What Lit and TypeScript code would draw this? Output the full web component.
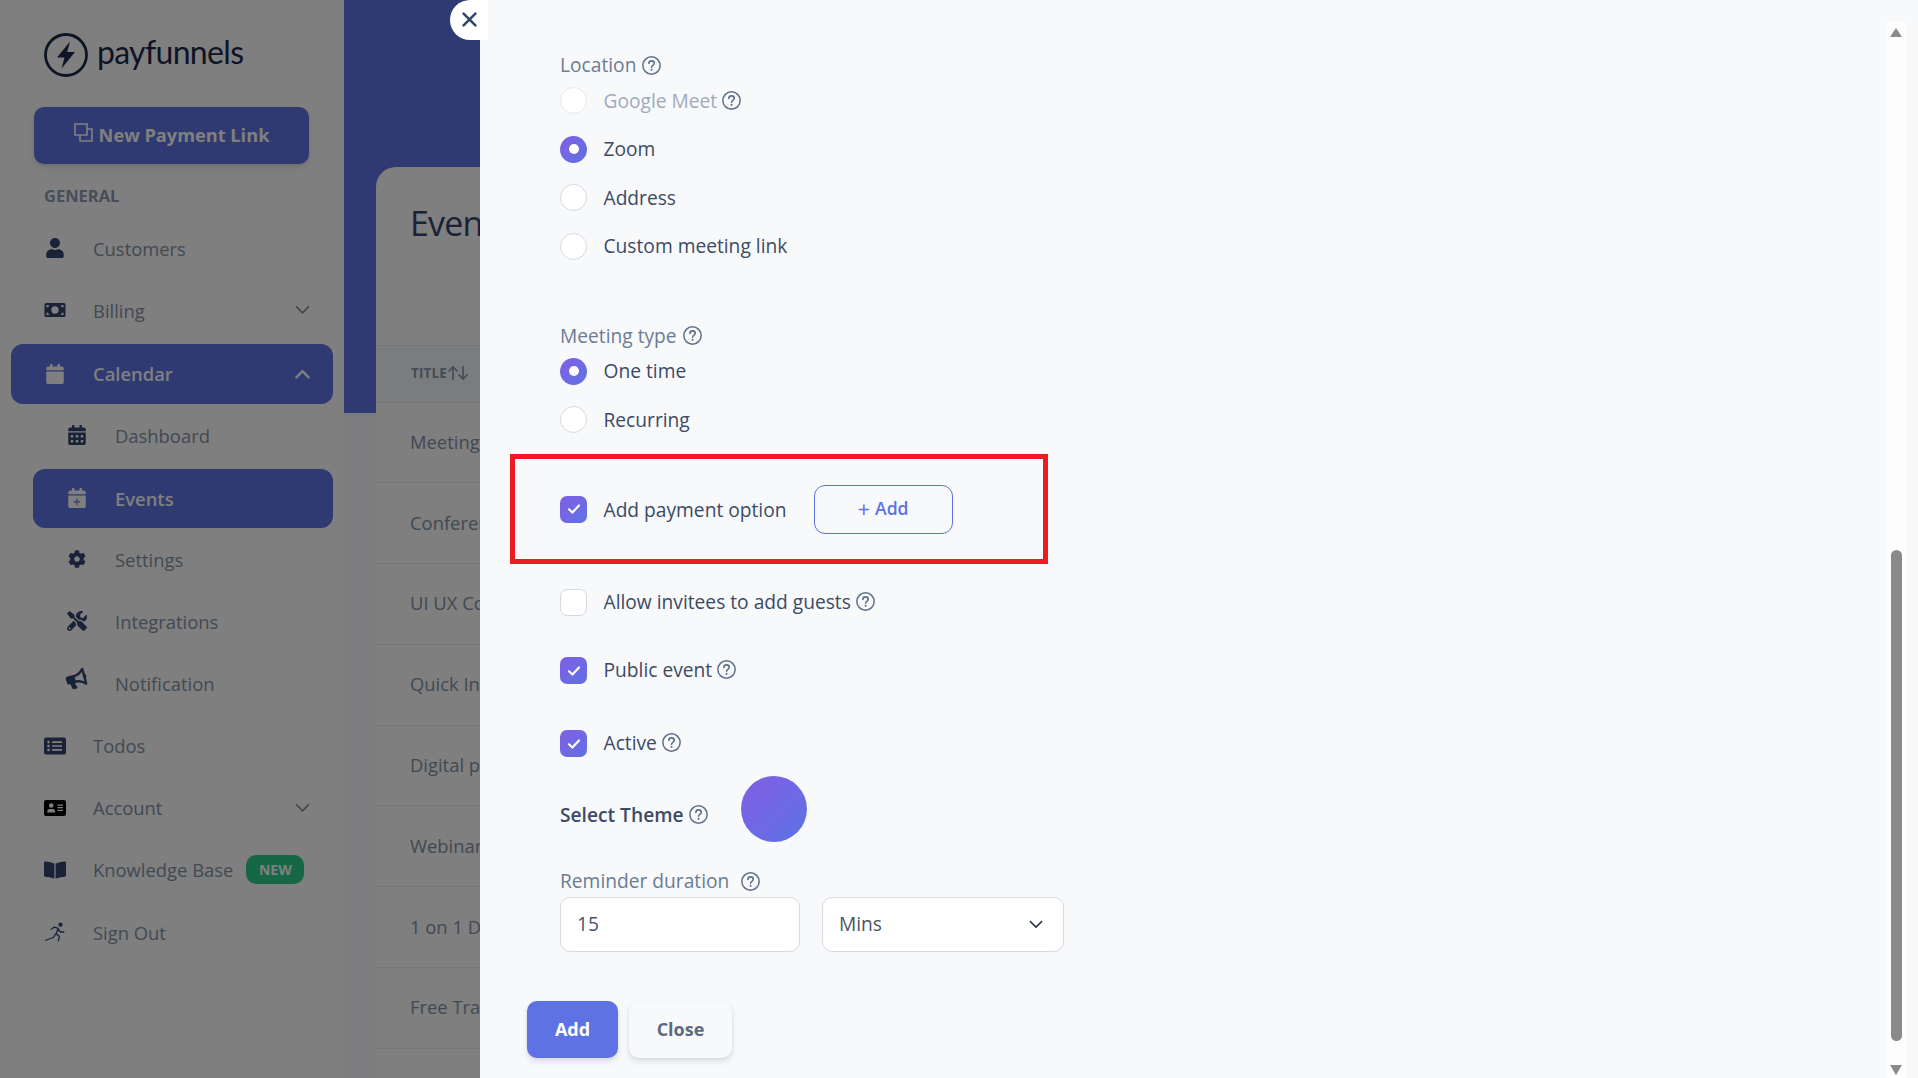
import { LitElement, html, css } from "lit";
import { customElement } from "lit/decorators.js";

const fa = (vb: string, d: string, cls = "ico") =>
  html`<svg class=${cls} viewBox=${vb} fill="currentColor" aria-hidden="true"><path d=${d}></path></svg>`;

const icons: Record<string, any> = {
  user: fa("0 0 448 512", "M224 256c70.7 0 128-57.3 128-128S294.7 0 224 0 96 57.3 96 128s57.3 128 128 128zm89.6 32h-16.7c-22.2 10.2-46.9 16-72.9 16s-50.6-5.8-72.9-16h-16.7C60.2 288 0 348.2 0 422.4V464c0 26.5 21.5 48 48 48h352c26.5 0 48-21.5 48-48v-41.6c0-74.2-60.2-134.4-134.4-134.4z"),
  money: html`<svg class="ico w" viewBox="0 0 22 16" aria-hidden="true"><path fill="currentColor" fill-rule="evenodd" d="M2 1h18a1.500 1.500 0 0 1 1.500 1.500v11A1.500 1.500 0 0 1 20 15H2a1.500 1.500 0 0 1-1.500-1.500v-11A1.500 1.500 0 0 1 2 1zM11 4.300a3.700 3.700 0 1 0 0 7.400 3.700 3.700 0 0 0 0-7.400zM2.500 3v2.500A2.500 2.500 0 0 0 5 3zM17 3a2.500 2.500 0 0 0 2.500 2.500V3zM2.500 10.500V13H5a2.500 2.500 0 0 0-2.500-2.500zM19.500 10.500A2.500 2.500 0 0 0 17 13h2.500z"></path></svg>`,
  calendar: fa("0 0 448 512", "M12 192h424c6.600 0 12 5.400 12 12v260c0 26.500-21.500 48-48 48H48c-26.500 0-48-21.500-48-48V204c0-6.600 5.400-12 12-12zm436-44v-36c0-26.500-21.500-48-48-48h-48V12c0-6.600-5.400-12-12-12h-40c-6.600 0-12 5.400-12 12v52H160V12c0-6.600-5.400-12-12-12h-40c-6.600 0-12 5.400-12 12v52H48C21.500 64 0 85.500 0 112v36c0 6.600 5.400 12 12 12h424c6.600 0 12-5.400 12-12z"),
  calendarAlt: fa("0 0 448 512", "M0 464c0 26.500 21.500 48 48 48h352c26.500 0 48-21.500 48-48V192H0v272zm320-196c0-6.600 5.400-12 12-12h40c6.600 0 12 5.400 12 12v40c0 6.600-5.400 12-12 12h-40c-6.600 0-12-5.400-12-12v-40zm0 128c0-6.600 5.400-12 12-12h40c6.600 0 12 5.400 12 12v40c0 6.600-5.400 12-12 12h-40c-6.600 0-12-5.400-12-12v-40zM192 268c0-6.600 5.400-12 12-12h40c6.600 0 12 5.400 12 12v40c0 6.600-5.400 12-12 12h-40c-6.600 0-12-5.400-12-12v-40zm0 128c0-6.600 5.400-12 12-12h40c6.600 0 12 5.400 12 12v40c0 6.600-5.400 12-12 12h-40c-6.600 0-12-5.400-12-12v-40zM64 268c0-6.600 5.400-12 12-12h40c6.600 0 12 5.400 12 12v40c0 6.600-5.400 12-12 12H76c-6.600 0-12-5.400-12-12v-40zm0 128c0-6.600 5.400-12 12-12h40c6.600 0 12 5.400 12 12v40c0 6.600-5.400 12-12 12H76c-6.600 0-12-5.400-12-12v-40zM400 64h-48V16c0-8.800-7.200-16-16-16h-32c-8.800 0-16 7.200-16 16v48H160V16c0-8.800-7.200-16-16-16h-32c-8.800 0-16 7.200-16 16v48H48C21.500 64 0 85.500 0 112v48h448v-48c0-26.500-21.500-48-48-48z"),
  calendarPlus: html`<svg class="ico" viewBox="0 0 448 512" aria-hidden="true"><path fill="currentColor" fill-rule="evenodd" d="M436 160H12c-6.600 0-12-5.400-12-12v-36c0-26.500 21.500-48 48-48h48V12c0-6.600 5.400-12 12-12h40c6.600 0 12 5.400 12 12v52h128V12c0-6.600 5.400-12 12-12h40c6.600 0 12 5.400 12 12v52h48c26.500 0 48 21.500 48 48v36c0 6.600-5.400 12-12 12zM12 192h424c6.600 0 12 5.400 12 12v260c0 26.500-21.500 48-48 48H48c-26.500 0-48-21.500-48-48V204c0-6.600 5.400-12 12-12zM208 270v72h-72v28h72v72h28v-72h72v-28h-72v-72z"></path></svg>`,
  cog: fa("0 0 512 512", "M487.400 315.700l-42.600-24.600c4.300-23.200 4.300-47 0-70.200l42.600-24.600c4.900-2.800 7.100-8.600 5.500-14-11.100-35.600-30-67.800-54.700-94.600-3.800-4.100-10-5.100-14.800-2.300L380.800 110c-17.900-15.400-38.500-27.300-60.800-35.100V25.800c0-5.600-3.900-10.500-9.400-11.700-36.700-8.200-74.300-7.800-109.200 0-5.500 1.200-9.400 6.100-9.400 11.700V75c-22.200 7.900-42.800 19.800-60.800 35.100L88.700 85.500c-4.900-2.800-11-1.900-14.800 2.300-24.700 26.700-43.600 58.900-54.700 94.600-1.700 5.400.6 11.200 5.500 14L67.300 221c-4.300 23.200-4.300 47 0 70.200l-42.600 24.600c-4.900 2.800-7.100 8.600-5.500 14 11.100 35.600 30 67.800 54.700 94.600 3.800 4.100 10 5.100 14.800 2.300l42.600-24.600c17.900 15.400 38.500 27.300 60.800 35.100v49.200c0 5.600 3.900 10.500 9.400 11.700 36.700 8.200 74.300 7.800 109.200 0 5.500-1.200 9.400-6.100 9.400-11.700v-49.200c22.200-7.900 42.800-19.800 60.800-35.100l42.600 24.600c4.900 2.800 11 1.900 14.800-2.300 24.700-26.700 43.600-58.900 54.700-94.600 1.500-5.500-.7-11.300-5.600-14.100zM256 336c-44.100 0-80-35.900-80-80s35.900-80 80-80 80 35.900 80 80-35.900 80-80 80z", "ico cog"),
  tools: fa("0 0 512 512", "M501.100 395.700L384 278.600c-23.100-23.100-57.600-27.600-85.400-13.900L192 158.100V96L64 0 0 64l96 128h62.100l106.600 106.600c-13.600 27.800-9.200 62.300 13.900 85.400l117.100 117.100c14.600 14.600 38.200 14.600 52.700 0l52.700-52.700c14.500-14.600 14.500-38.200 0-52.700zM331.700 225c28.300 0 54.900 11 74.900 31l19.400 19.400c15.800-6.900 30.800-16.500 43.800-29.500 37.100-37.100 49.700-89.300 37.900-136.700-2.200-9-13.500-12.100-20.100-5.500l-74.400 74.400-67.900-11.300L334 98.900l74.400-74.400c6.600-6.600 3.400-17.900-5.700-20.200-47.400-11.700-99.600.9-136.600 37.900-28.500 28.500-41.900 66.100-41.200 103.600l82.100 82.100c8.100-1.900 16.500-2.900 24.700-2.900zm-103.900 82l-56.700-56.700L18.700 402.800c-25 25-25 65.500 0 90.500s65.500 25 90.500 0l123.600-123.600c-7.600-19.900-9.900-41.600-5-62.700zM64 472c-13.200 0-24-10.800-24-24 0-13.300 10.700-24 24-24s24 10.700 24 24c0 13.200-10.700 24-24 24z"),
  bullhorn: html`<svg class="ico horn" viewBox="0 0 576 512" aria-hidden="true"><path fill="currentColor" d="M576 240c0-23.630-12.950-44.040-32-55.120V32.010C544 23.260 537.020 0 512 0c-7.120 0-14.190 2.380-19.980 7.020l-85.030 68.030C364.280 109.190 310.660 128 256 128H64c-35.350 0-64 28.650-64 64v96c0 35.350 28.650 64 64 64h33.700c-1.390 10.480-2.180 21.140-2.180 32 0 39.770 9.260 77.350 25.560 110.940 5.190 10.690 16.520 17.060 28.400 17.060h74.280c26.050 0 41.690-29.840 25.900-50.560-16.400-21.520-26.150-48.360-26.150-77.440 0-11.110 1.620-21.790 4.410-32H256c54.660 0 108.280 18.810 150.980 52.950l85.030 68.030a32.023 32.023 0 0 0 19.980 7.020c24.920 0 32-22.780 32-32V295.130C563.050 284.040 576 263.630 576 240zm-96 141.420l-33.050-26.440C392.950 311.780 325.120 288 256 288v-96c69.120 0 136.950-23.780 190.950-66.980L480 98.580v282.840z"></path></svg>`,
  list: html`<svg class="ico w" viewBox="0 0 22 17" aria-hidden="true"><path fill="currentColor" fill-rule="evenodd" d="M2 0h18a2 2 0 0 1 2 2v13a2 2 0 0 1-2 2H2a2 2 0 0 1-2-2V2a2 2 0 0 1 2-2zM4.500 3.300a1.300 1.300 0 1 0 0 2.600 1.300 1.300 0 0 0 0-2.600zm0 3.900a1.300 1.300 0 1 0 0 2.600 1.300 1.300 0 0 0 0-2.600zm0 3.900a1.300 1.300 0 1 0 0 2.600 1.300 1.300 0 0 0 0-2.600zM8 3.800v1.600h10V3.800zm0 3.900v1.600h10V7.700zm0 3.900v1.600h10v-1.600z"></path></svg>`,
  id: html`<svg class="ico w idc" viewBox="0 0 22 16" aria-hidden="true"><path fill="currentColor" fill-rule="evenodd" d="M2 0h18a2 2 0 0 1 2 2v12a2 2 0 0 1-2 2H2a2 2 0 0 1-2-2V2a2 2 0 0 1 2-2zM7.200 3.200a2.300 2.300 0 1 0 0 4.600 2.300 2.300 0 0 0 0-4.600zM3.300 12.500h7.800v-1.300c0-1.300-1-2.300-2.200-2.300H5.500c-1.200 0-2.200 1-2.200 2.300zM13.500 4.500v1.200h5.500V4.500zm0 2.600v1.200h5.500V7.100zm0 2.600v1.200h5.500V9.700z"></path></svg>`,
  book: fa("0 0 576 512", "M542.220 32.050c-54.800 3.110-163.720 14.430-230.960 55.590-4.640 2.840-7.270 7.890-7.270 13.170v363.870c0 11.550 12.630 18.850 23.280 13.490 69.180-34.820 169.230-44.320 218.700-46.920 16.890-.89 30.020-14.430 30.020-30.660V62.750c.01-17.710-15.350-31.740-33.770-30.700zM264.730 87.640C197.500 46.480 88.580 35.170 33.780 32.050 15.360 31.010 0 45.040 0 62.750V400.600c0 16.240 13.130 29.780 30.020 30.660 49.490 2.600 149.590 12.110 218.770 46.950 10.620 5.350 23.210-1.940 23.210-13.460V100.630c0-5.290-2.620-10.140-7.270-12.990z", "ico w"),
  run: html`<svg class="ico w run" viewBox="0 0 20 18" aria-hidden="true"><circle cx="15" cy="2.300" r="1.900" fill="currentColor"></circle><path fill="none" stroke="currentColor" stroke-width="1.200" stroke-linecap="round" stroke-linejoin="round" d="M6.500 6.500 9.500 4.500 13 5.800 11 10.500 14 13 13 17M12.700 6.500 15 9 18 9M10.500 10.800 8.500 14 1.500 16.500"></path></svg>`,
};

const chevron = (up = false) =>
  html`<svg class="chev ${up ? "upc" : ""}" viewBox="0 0 16 10" aria-hidden="true"><path d=${up ? "M1.500 8.500 8 2l6.500 6.500" : "M1.500 1.500 8 8l6.500-6.500"} fill="none" stroke="currentColor" stroke-width=${up ? "2.600" : "1.800"} stroke-linecap="round" stroke-linejoin="round"></path></svg>`;

const help = html`<svg class="help" viewBox="0 0 20 20" aria-hidden="true"><circle cx="10" cy="10" r="9.100" fill="none" stroke="currentColor" stroke-width="1.600"></circle><path d="M7.200 7.800c0-1.600 1.200-2.700 2.900-2.700s2.800 1.100 2.800 2.500c0 1.100-.6 1.700-1.500 2.300-.8.500-1.300 1-1.300 2" fill="none" stroke="currentColor" stroke-width="1.700" stroke-linecap="round"></path><circle cx="10.100" cy="14.600" r="1.100" fill="currentColor"></circle></svg>`;

const check = html`<svg class="tick" viewBox="0 0 14 12" aria-hidden="true"><path d="M2 6.300 5.400 9.500 12 2.500" fill="none" stroke="#fff" stroke-width="2.200" stroke-linecap="round" stroke-linejoin="round"></path></svg>`;

@customElement("app-root")
export class AppRoot extends LitElement {
  static styles = css`
    :host { display: block; position: relative; width: 1918px; height: 1078px; overflow: hidden; font-family: "Open Sans", "Liberation Sans", sans-serif; color: #525f7f; background: #f8f9fe; }
    * { box-sizing: border-box; }
    .page { display: flex; width: 1918px; height: 1078px; }
    .sidebar { width: 344px; flex: none; height: 100%; background: #fff; }
    .logo { display: flex; align-items: center; gap: 9px; margin: 33px 0 0 44px; height: 44px; color: #1a2b4a; }
    .logo svg { width: 44px; height: 44px; flex: none; }
    .logo span { font-family: "Lato", sans-serif; font-size: 32px; line-height: 44px; letter-spacing: -.67px; position: relative; top: -3px; }
    .newlink { display: flex; align-items: center; justify-content: center; gap: 6px; width: 275px; height: 57px; margin: 30px 0 0 34px; padding-bottom: 2px; background: #5e72e4; color: #fff; border-radius: 10px; font-weight: 700; font-size: 18.200px; box-shadow: 0 4px 6px rgba(50,50,93,.11), 0 1px 3px rgba(0,0,0,.08); }
    .newlink svg { width: 19px; height: 19px; position: relative; top: -2px; }
    .general { margin: 22px 0 0 44px; height: 19px; line-height: 19px; font-size: 16.500px; font-weight: 700; color: #8f9bb3; }
    .nav { margin-top: 12px; display: flex; flex-direction: column; }
    .item { display: flex; align-items: center; height: 62.200px; flex: none; padding-left: 44px; padding-right: 34px; font-size: 18.400px; color: #8492a6; }
    .item .ic { width: 49px; flex: none; display: flex; align-items: center; color: #32456e; }
    .ico { width: 20px; height: 20px; margin-left: 1px; display: block; }
    .ico.w { width: 22px; margin-left: 0; }
    .ico.cog { width: 18px; height: 18px; margin-left: 2px; }
    .idc { color: #000; }
    .run { width: 20px; margin-left: 2px; }
    .horn { transform: rotate(-15deg); margin-top: -9px; width: 21px; margin-left: 0; }
    .chev { width: 15px; height: 10px; margin-left: auto; display: block; color: #8492a6; flex: none; }
    .item.sub { padding-left: 66px; }
    .item.active { background: #5e72e4; color: #fff; font-weight: 600; border-radius: 12px; }
    .item.active .ic, .item.active .chev { color: #fff; }
    .item.cal { margin: 2.600px 11px 0; padding-left: 33px; padding-right: 23px; height: 60px; }
    .item.evt { margin: 2.800px 11px 0 33px; padding-left: 33px; height: 59px; }
    .badge { margin-left: 13px; height: 29px; width: 58px; display: flex; align-items: center; justify-content: center; border-radius: 10px; background: #2dce89; color: #fff; font-size: 14px; font-weight: 700; }

    .main { flex: 1; min-width: 0; display: flex; flex-direction: column; }
    .hero { height: 413px; flex: none; background: #5e72e4; }
    .card { flex: 1; margin: -246px 32px 0; background: #fff; border-radius: 20px 20px 0 0; position: relative; }
    .card h1 { margin: 0; padding: 33px 0 0 34px; height: 178px; font-size: 34px; line-height: 46px; font-weight: 500; letter-spacing: -.8px; color: #32456e; }
    .thead { height: 57.500px; display: flex; align-items: center; padding-left: 35px; padding-bottom: 1px; border-top: 1px solid #e9ecef; border-bottom: 1px solid #e9ecef; background: #f6f9fc; font-size: 13.500px; font-weight: 700; letter-spacing: .1px; color: #8898aa; }
    .thead svg { width: 22px; height: 16px; margin-left: 0; }
    .row { height: 80.800px; flex: none; display: flex; align-items: center; padding-left: 34px; padding-bottom: 2px; border-bottom: 1px solid #e9ecef; font-size: 18.400px; color: #8492a6; white-space: nowrap; }

    .overlay { position: absolute; inset: 0; background: rgba(0,0,0,.5); }
    .closebtn { position: absolute; left: 450px; top: 0; width: 38px; height: 40px; padding-bottom: 2px; background: #fff; border-radius: 20px 0 0 20px; display: flex; align-items: center; justify-content: center; color: #32456e; z-index: 2; }
    .closebtn svg { width: 15px; height: 15px; }
    .modal { position: absolute; left: 480px; top: 0; right: 0; bottom: 0; background: #f8f9fb; padding: 53px 0 0 80px; color: #3c4a65; font-size: 19.200px; overflow: hidden; }
    .label { display: flex; align-items: center; gap: 6px; height: 24px; line-height: 24px; color: #6b7c93; }
    .help { width: 19px; height: 19px; flex: none; color: #5f7089; }
    .opts { display: flex; flex-direction: column; gap: 21.600px; margin-top: 10px; }
    .opt { display: flex; align-items: center; height: 27px; gap: 16.500px; white-space: nowrap; }
    .opt .t { display: flex; align-items: center; gap: 5px; position: relative; top: -.5px; }
    .opt.dis { color: #a0aabb; }
    .raise .t { top: -1.500px; }
    .redbox .opt .t { top: .5px; }
    .radio, .box { width: 27px; height: 27px; flex: none; background: #fff; border: 1px solid #d5d9e0; display: flex; align-items: center; justify-content: center; }
    .radio { border-radius: 50%; }
    .box { border-radius: 7px; }
    .opt.dis .radio { border-color: #e6e8ec; }
    .on { border: 0; background: linear-gradient(135deg, #825ee4, #5e72e4); }
    .radio.on::after { content: ""; width: 10px; height: 10px; border-radius: 50%; background: #fff; }
    .tick { width: 14px; height: 12px; }
    .meeting { margin-top: 64px; }
    .redbox { display: flex; align-items: center; width: 538px; height: 110px; margin: 21px 0 25px -50px; padding-left: 45px; border: 5px solid #ed1c24; }
    .addpay { margin-left: 27px; width: 139px; height: 49px; padding-bottom: 2px; border: 1px solid #5e72e4; border-radius: 11px; display: flex; align-items: center; justify-content: center; gap: 5px; color: #5e72e4; font-size: 17.600px; font-weight: 600; }
    .addpay .plus { font-size: 22px; line-height: 22px; font-weight: 400; }
    .mt41 { margin-top: 41px; }
    .mt46 { margin-top: 46px; }
    .theme { display: flex; align-items: center; margin-top: 19px; height: 66px; }
    .theme b { font-weight: 600; padding-top: 11px; display: flex; align-items: center; gap: 5px; line-height: 24px; width: 181px; }
    .circle { width: 66px; height: 66px; border-radius: 50%; background: linear-gradient(135deg, #825ee4, #5e72e4); }
    .remind { margin-top: 27px; gap: 12px; }
    .fields { display: flex; gap: 22px; margin-top: 4px; }
    .field { height: 55px; padding: 0 16px 2px; background: #fff; border: 1px solid #d5d9e0; border-radius: 10px; display: flex; align-items: center; color: #4a5568; }
    .f1 { width: 240px; }
    .f2 { width: 242px; justify-content: space-between; }
    .f2 svg { width: 14px; height: 9px; margin: 2px 4px 0 0; color: #2a3240; }
    .actions { display: flex; gap: 11px; margin: 49px 0 0 -33px; }
    .btn { height: 57px; padding-bottom: 2px; display: flex; align-items: center; justify-content: center; border-radius: 10px; font-weight: 700; font-size: 18px; box-shadow: 0 4px 6px rgba(50,50,93,.11), 0 1px 3px rgba(0,0,0,.08); }
    .primary { width: 91px; background: #5e72e4; color: #fff; }
    .secondary { width: 103px; background: #f8f9fb; color: #5a6a82; }
    .sbar { position: absolute; left: 1407px; top: 22px; width: 20px; bottom: 0; background: #fdfdfd; }
    .thumb { position: absolute; left: 4px; top: 528px; width: 11px; height: 491px; border-radius: 6px; background: #8a8a8a; }
    .arrow { position: absolute; left: 3px; width: 0; height: 0; border-left: 6.500px solid transparent; border-right: 6.500px solid transparent; }
    .up { top: 6px; border-bottom: 9px solid #8a8a8a; }
    .down { top: 1043px; border-top: 10px solid #8a8a8a; }
  `;

  private navRow(icon: any, label: string, opts: { cls?: string; chev?: "up" | "down"; badge?: boolean } = {}) {
    return html`<div class="item ${opts.cls ?? ""}">
      <span class="ic">${icon}</span><span class="txt">${label}</span>
      ${opts.badge ? html`<span class="badge">NEW</span>` : ""}
      ${opts.chev ? chevron(opts.chev === "up") : ""}
    </div>`;
  }

  private opt(label: string, kind: "radio" | "box", on = false, hasHelp = false, dis = false) {
    return html`<div class="opt ${dis ? "dis" : ""}">
      <span class="${kind} ${on ? "on" : ""}">${kind === "box" && on ? check : ""}</span>
      <span class="t">${label}${hasHelp ? help : ""}</span>
    </div>`;
  }

  render() {
    const rows = ["Meeting with client", "Conference call", "UI UX Course", "Quick Intro call", "Digital product", "Webinar", "1 on 1 Demo", "Free Training"];
    return html`
      <div class="page">
        <aside class="sidebar">
          <div class="logo">
            <svg viewBox="0 0 44 44" aria-hidden="true"><circle cx="22" cy="22" r="20.500" fill="none" stroke="currentColor" stroke-width="2.800"></circle><path fill="currentColor" d="M26 8.500 13 24.500h7.500L17.500 35.500 31 19h-7.800z"></path></svg>
            <span>payfunnels</span>
          </div>
          <div class="newlink">
            <svg viewBox="0 0 19 19" aria-hidden="true"><path fill="none" stroke="currentColor" stroke-width="1.600" d="M1 1h12v11H1zM6 12v6h12V6h-5"></path></svg>
            <span>New Payment Link</span>
          </div>
          <div class="general">GENERAL</div>
          <nav class="nav">
            ${this.navRow(icons.user, "Customers")}
            ${this.navRow(icons.money, "Billing", { chev: "down" })}
            ${this.navRow(icons.calendar, "Calendar", { cls: "active cal", chev: "up" })}
            ${this.navRow(icons.calendarAlt, "Dashboard", { cls: "sub" })}
            ${this.navRow(icons.calendarPlus, "Events", { cls: "active evt" })}
            ${this.navRow(icons.cog, "Settings", { cls: "sub" })}
            ${this.navRow(icons.tools, "Integrations", { cls: "sub" })}
            ${this.navRow(icons.bullhorn, "Notification", { cls: "sub" })}
            ${this.navRow(icons.list, "Todos")}
            ${this.navRow(icons.id, "Account", { chev: "down" })}
            ${this.navRow(icons.book, "Knowledge Base", { badge: true })}
            ${this.navRow(icons.run, "Sign Out")}
          </nav>
        </aside>
        <main class="main">
          <div class="hero"></div>
          <section class="card">
            <h1>Events</h1>
            <div class="thead">TITLE<svg viewBox="0 0 22 16" aria-hidden="true"><path d="M6 15V2M1.500 6.500 6 2l4.500 4.500M16 1v13M11.500 9.500 16 14l4.500-4.500" fill="none" stroke="currentColor" stroke-width="1.600"></path></svg></div>
            ${rows.map((r) => html`<div class="row">${r}</div>`)}
          </section>
        </main>
      </div>
      <div class="overlay"></div>
      <div class="closebtn"><svg viewBox="0 0 14 14" aria-hidden="true"><path d="M1.500 1.500l11 11M12.500 1.500l-11 11" fill="none" stroke="currentColor" stroke-width="2.400" stroke-linecap="round"></path></svg></div>
      <div class="modal">
        <div class="label">Location ${help}</div>
        <div class="opts">
          ${this.opt("Google Meet", "radio", false, true, true)}
          ${this.opt("Zoom", "radio", true)}
          ${this.opt("Address", "radio")}
          ${this.opt("Custom meeting link", "radio")}
        </div>
        <div class="label meeting">Meeting type ${help}</div>
        <div class="opts">
          ${this.opt("One time", "radio", true)}
          ${this.opt("Recurring", "radio")}
        </div>
        <div class="redbox">
          ${this.opt("Add payment option", "box", true)}
          <div class="addpay"><span class="plus">+</span><span>Add</span></div>
        </div>
        <div class="raise">${this.opt("Allow invitees to add guests", "box", false, true)}</div>
        <div class="mt41 raise">${this.opt("Public event", "box", true, true)}</div>
        <div class="mt46 raise">${this.opt("Active", "box", true, true)}</div>
        <div class="theme"><b>Select Theme ${help}</b><span class="circle"></span></div>
        <div class="label remind">Reminder duration ${help}</div>
        <div class="fields">
          <div class="field f1">15</div>
          <div class="field f2">Mins ${chevron()}</div>
        </div>
        <div class="actions">
          <div class="btn primary">Add</div>
          <div class="btn secondary">Close</div>
        </div>
        <div class="sbar"><span class="arrow up"></span><span class="thumb"></span><span class="arrow down"></span></div>
      </div>
    `;
  }
}
